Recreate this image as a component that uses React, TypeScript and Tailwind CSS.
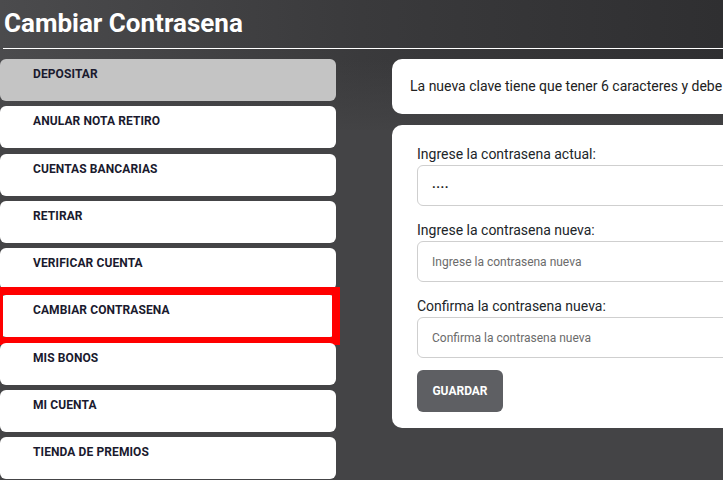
import React from "react";

const menu = [
  "DEPOSITAR",
  "ANULAR NOTA RETIRO",
  "CUENTAS BANCARIAS",
  "RETIRAR",
  "VERIFICAR CUENTA",
  "CAMBIAR CONTRASENA",
  "MIS BONOS",
  "MI CUENTA",
  "TIENDA DE PREMIOS",
];

function Field({ label, placeholder, value }: { label: string; placeholder: string; value?: string }) {
  return (
    <div className="flex flex-col">
      <label className="text-[14px] leading-[20px] text-[#212529] mb-[1px]">{label}</label>
      <div className="h-[41px] w-[340px] rounded-[6px] border border-[#cfcfcf] bg-white flex items-center pl-[14px]">
        {value ? (
          <span className="text-[13px] font-bold tracking-[0.5px] text-[#222] leading-none -mt-[4px]">{value}</span>
        ) : (
          <span className="text-[12px] text-[#6b6b6b]">{placeholder}</span>
        )}
      </div>
    </div>
  );
}

export default function App() {
  return (
    <div
      className="relative w-[723px] h-[480px] overflow-hidden bg-[#444446] text-[#111]"
      style={{ fontFamily: "Roboto, 'Liberation Sans', sans-serif" }}
    >
      <div className="absolute inset-x-0 top-0 h-[130px] bg-gradient-to-r from-[#4b4b4d] via-[#3a3a3c] to-[#2f2f31]" />
      <div className="absolute inset-x-0 top-[60px] h-[80px] bg-gradient-to-b from-transparent to-[#444446]" />
      <div className="relative">
        <header className="h-[48px] pl-[4px] pt-[7px]">
          <h1 className="text-[26px] font-bold text-white leading-[32px]">Cambiar Contrasena</h1>
        </header>
        <div className="ml-[3px] h-px bg-white" />
        <div className="flex pt-[10px]">
          <nav className="w-[336px] shrink-0 flex flex-col gap-[5.25px]">
            {menu.map((item, i) => (
              <div
                key={item}
                className={`relative h-[42px] rounded-[6px] pl-[33px] pt-[2px] ${i === 0 ? "bg-[#c4c4c4]" : "bg-white"}`}
              >
                <span className="text-[12px] font-bold text-[#1a1a2e] tracking-[0.1px]">{item}</span>
                {item === "CAMBIAR CONTRASENA" && (
                  <div className="absolute left-[-5px] right-[-4px] top-[-8px] bottom-[-8px] border-[8px] border-[#ff0000]" />
                )}
              </div>
            ))}
          </nav>
          <main className="ml-[56px] shrink-0 flex flex-col gap-[11px]">
            <div className="h-[55px] w-[400px] rounded-[10px] bg-white pl-[18px] flex items-center">
              <p className="text-[14px] text-[#222] whitespace-nowrap">
                La nueva clave tiene que tener 6 caracteres y debe
              </p>
            </div>
            <div className="w-[400px] h-[303px] rounded-[10px] bg-white pl-[25px] pt-[19px] flex flex-col gap-[14px]">
              <Field label="Ingrese la contrasena actual:" placeholder="" value="...." />
              <Field label="Ingrese la contrasena nueva:" placeholder="Ingrese la contrasena nueva" />
              <Field label="Confirma la contrasena nueva:" placeholder="Confirma la contrasena nueva" />
              <button className="mt-[-2px] w-[86px] h-[42px] rounded-[6px] bg-[#5e5f63] text-white text-[12px] font-bold">
                GUARDAR
              </button>
            </div>
          </main>
        </div>
      </div>
    </div>
  );
}
